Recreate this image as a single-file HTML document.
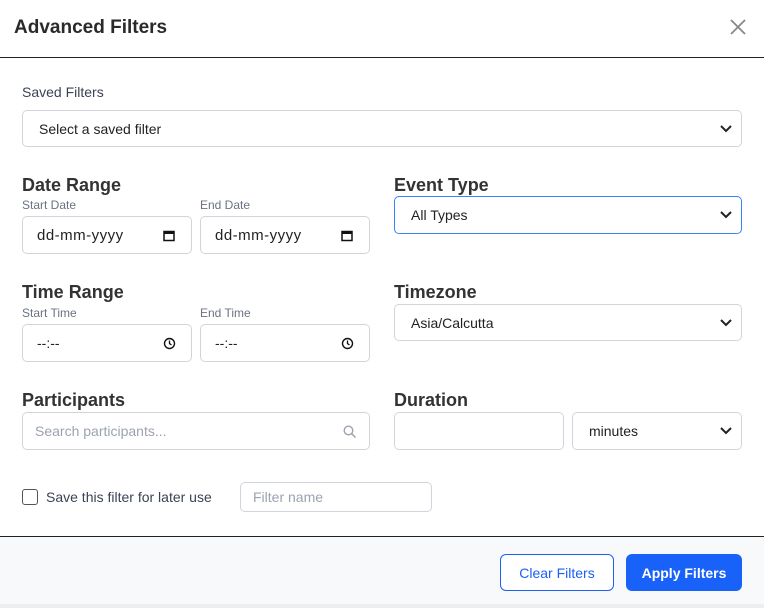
<!DOCTYPE html>
<html><head><style>
*{box-sizing:border-box;margin:0;padding:0}
body{width:764px;height:608px;background:#fff;font-family:"Liberation Sans",sans-serif;position:relative;overflow:hidden;color:#212529}
.a{position:absolute}
.h{font-weight:bold;font-size:18px;color:#333}
.sl{font-size:12px;color:#6b7280}
.box{position:absolute;border:1px solid #d1d5db;border-radius:5px;background:#fff;font-size:14px;color:#222;display:flex;align-items:center;padding-left:16px}
.chev{position:absolute;right:8px;top:50%;margin-top:-5px}
</style></head><body>
<div class="a" style="left:14px;top:17px;font-size:19px;font-weight:bold;color:#2a2a2a">Advanced Filters</div>
<svg class="a" style="left:729px;top:18px" width="18" height="18" viewBox="0 0 18 18"><path d="M2 2L16 16M16 2L2 16" stroke="#888" stroke-width="1.8"/></svg>
<div class="a" style="left:0;top:57px;width:764px;height:1px;background:#222"></div>

<div class="a" style="left:22px;top:84px;font-size:14px;color:#3b4354">Saved Filters</div>
<div class="box" style="left:22px;top:110px;width:720px;height:37px">Select a saved filter<svg class="chev" width="14" height="10"><path d="M2 2L7 7L12 2" stroke="#222" stroke-width="2" fill="none"/></svg></div>

<div class="a h" style="left:22px;top:175px">Date Range</div>
<div class="a sl" style="left:22px;top:198px">Start Date</div>
<div class="a sl" style="left:200px;top:198px">End Date</div>
<div class="box" style="left:22px;top:216px;width:170px;height:38px;padding-left:14px;font-size:15px;letter-spacing:0.5px">dd-mm-yyyy<svg class="a" style="left:140px;top:13px" width="12" height="12"><rect x="1" y="1.5" width="10" height="9" fill="none" stroke="#111" stroke-width="1.5"/><rect x="1" y="1.5" width="10" height="2.5" fill="#111"/></svg></div>
<div class="box" style="left:200px;top:216px;width:170px;height:38px;padding-left:14px;font-size:15px;letter-spacing:0.5px">dd-mm-yyyy<svg class="a" style="left:140px;top:13px" width="12" height="12"><rect x="1" y="1.5" width="10" height="9" fill="none" stroke="#111" stroke-width="1.5"/><rect x="1" y="1.5" width="10" height="2.5" fill="#111"/></svg></div>

<div class="a h" style="left:394px;top:175px">Event Type</div>
<div class="box" style="left:394px;top:196px;width:348px;height:38px;border-color:#3b82f6">All Types<svg class="chev" width="14" height="10"><path d="M2 2L7 7L12 2" stroke="#222" stroke-width="2" fill="none"/></svg></div>

<div class="a h" style="left:22px;top:282px">Time Range</div>
<div class="a sl" style="left:22px;top:306px">Start Time</div>
<div class="a sl" style="left:200px;top:306px">End Time</div>
<div class="box" style="left:22px;top:324px;width:170px;height:38px;padding-left:14px">--:--<svg class="a" style="left:140px;top:12px" width="13" height="13"><circle cx="6.5" cy="6.5" r="5" fill="none" stroke="#111" stroke-width="1.4"/><path d="M6.5 3.5V6.5L8.5 8" stroke="#111" stroke-width="1.3" fill="none"/></svg></div>
<div class="box" style="left:200px;top:324px;width:170px;height:38px;padding-left:14px">--:--<svg class="a" style="left:140px;top:12px" width="13" height="13"><circle cx="6.5" cy="6.5" r="5" fill="none" stroke="#111" stroke-width="1.4"/><path d="M6.5 3.5V6.5L8.5 8" stroke="#111" stroke-width="1.3" fill="none"/></svg></div>

<div class="a h" style="left:394px;top:282px">Timezone</div>
<div class="box" style="left:394px;top:304px;width:348px;height:37px">Asia/Calcutta<svg class="chev" width="14" height="10"><path d="M2 2L7 7L12 2" stroke="#222" stroke-width="2" fill="none"/></svg></div>

<div class="a h" style="left:22px;top:390px">Participants</div>
<div class="box" style="left:22px;top:412px;width:348px;height:38px;padding-left:12px;color:#9ca3af">Search participants...<svg class="a" style="left:320px;top:12px" width="14" height="14"><circle cx="5.5" cy="5.5" r="4.3" fill="none" stroke="#9ca3af" stroke-width="1.4"/><path d="M8.7 8.7L12.5 12.5" stroke="#9ca3af" stroke-width="1.5"/></svg></div>

<div class="a h" style="left:394px;top:390px">Duration</div>
<div class="box" style="left:394px;top:412px;width:170px;height:38px"></div>
<div class="box" style="left:572px;top:412px;width:170px;height:38px">minutes<svg class="chev" width="14" height="10"><path d="M2 2L7 7L12 2" stroke="#222" stroke-width="2" fill="none"/></svg></div>

<div class="a" style="left:22px;top:489px;width:16px;height:16px;border:1px solid #555;border-radius:3px"></div>
<div class="a" style="left:46px;top:489px;font-size:14px;color:#3b4354">Save this filter for later use</div>
<div class="box" style="left:240px;top:482px;width:192px;height:30px;padding-left:12px;color:#9ca3af">Filter name</div>

<div class="a" style="left:0;top:536px;width:764px;height:68px;background:#f8f9fa;border-top:1px solid #222"></div>
<div class="a" style="left:0;top:604px;width:764px;height:4px;background:#eee"></div>
<div class="a" style="left:500px;top:554px;width:114px;height:37px;border:1px solid #1d5ff5;border-radius:6px;background:#fff;color:#1d5ff5;font-size:14px;display:flex;align-items:center;justify-content:center">Clear Filters</div>
<div class="a" style="left:626px;top:554px;width:116px;height:37px;border-radius:6px;background:#1962f9;color:#fff;font-size:14px;font-weight:bold;display:flex;align-items:center;justify-content:center">Apply Filters</div>
</body></html>
